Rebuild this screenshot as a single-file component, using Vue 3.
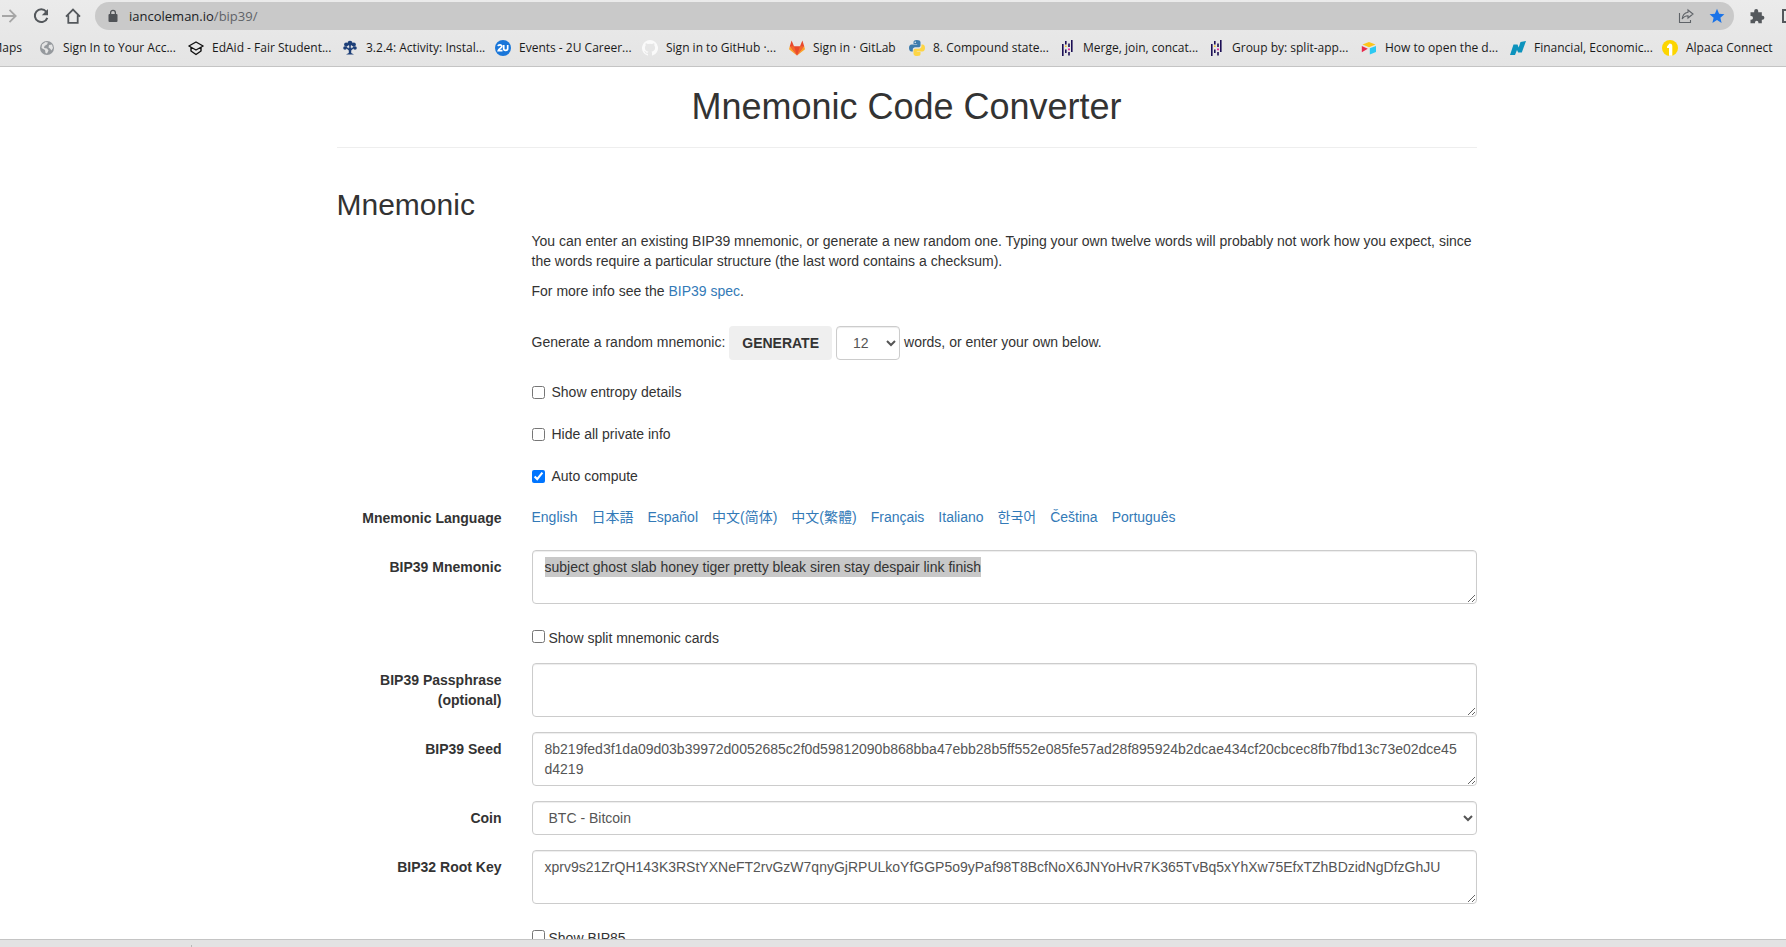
<script setup>
import { ref, onMounted } from 'vue'

const bookmarks = [
  { icon: 'globe', label: 'Sign In to Your Acc...' },
  { icon: 'edaid', label: 'EdAid - Fair Student...' },
  { icon: 'tree', label: '3.2.4: Activity: Instal...' },
  { icon: 'twou', label: 'Events - 2U Career...' },
  { icon: 'github', label: 'Sign in to GitHub ·...' },
  { icon: 'gitlab', label: 'Sign in · GitLab' },
  { icon: 'python', label: '8. Compound state...' },
  { icon: 'pandas', label: 'Merge, join, concat...' },
  { icon: 'pandas', label: 'Group by: split-app...' },
  { icon: 'airtable', label: 'How to open the d...' },
  { icon: 'nasdaq', label: 'Financial, Economic...' },
  { icon: 'alpaca', label: 'Alpaca Connect' }
]

const languages = ['English', '日本語', 'Español', '中文(简体)', '中文(繁體)', 'Français', 'Italiano', '한국어', 'Čeština', 'Português']

const phrase = ref('subject ghost slab honey tiger pretty bleak siren stay despair link finish')
const passphrase = ref('')
const seed = ref('8b219fed3f1da09d03b39972d0052685c2f0d59812090b868bba47ebb28b5ff552e085fe57ad28f895924b2dcae434cf20cbcec8fb7fbd13c73e02dce45d4219')
const rootKey = ref('xprv9s21ZrQH143K3RStYXNeFT2rvGzW7qnyGjRPULkoYfGGP5o9yPaf98T8BcfNoX6JNYoHvR7K365TvBq5xYhXw75EfxTZhBDzidNgDfzGhJU')
const strength = ref('12')
const coin = ref('btc')
const autoCompute = ref(true)

const phraseBox = ref(null)
onMounted(() => {
  phraseBox.value.focus({ preventScroll: true })
  phraseBox.value.select()
})
</script>

<template>
  <div class="window">
    <header class="chrome">
      <div class="toolbar">
        <button class="tool" aria-label="Forward">
          <svg viewBox="0 0 16 16" fill="none" stroke="#a6a6a6" stroke-width="1.8"><path d="M1 8h13M8.500 1.800 14.700 8l-6.200 6.200" /></svg>
        </button>
        <button class="tool" aria-label="Reload">
          <svg viewBox="0 0 16 16"><path d="M13.200 3.600A6.400 6.400 0 1 0 14.300 9.800" fill="none" stroke="#54585c" stroke-width="2" /><path d="M15 1v6.200H8.800z" fill="#54585c" /></svg>
        </button>
        <button class="tool home" aria-label="Home">
          <svg viewBox="0 0 16 16" fill="none" stroke="#54585c" stroke-width="1.800"><path d="M1 8.600 8 1.600l7 7M3.300 7.200v7.600h9.400V7.200" /></svg>
        </button>
        <div class="omnibox">
          <svg class="lock" viewBox="0 0 10 14"><rect x="0.500" y="5" width="9" height="8" rx="1" fill="#505357" /><path d="M2.600 6V3.700a2.400 2.400 0 0 1 4.800 0V6" fill="none" stroke="#505357" stroke-width="1.300" /></svg>
          <span class="url"><span class="host">iancoleman.io</span>/bip39/</span>
          <button class="tool" aria-label="Share">
            <svg viewBox="0 0 16 16" fill="none" stroke="#5f6368" stroke-width="1.100"><path d="M1.500 5v9.500h11V12" /><path d="M10 2l5 4-5 4V7.700C7.400 7.700 5.500 8.800 4.200 11 4.500 7.500 6.500 4.900 10 4.300z" /></svg>
          </button>
          <button class="tool" aria-label="Bookmark this tab">
            <svg viewBox="0 0 16 16"><path d="M8 .800l2.100 4.900 5.300.500-4 3.500 1.200 5.200L8 12.100l-4.600 2.800 1.200-5.200-4-3.500 5.300-.500z" fill="#1a73e8" /></svg>
          </button>
        </div>
        <button class="tool" aria-label="Extensions">
          <svg viewBox="0 0 16 16"><path d="M.500 4.200h3.700V3a2 2 0 0 1 4 0v1.200h3.600v3.600h.600a2 2 0 0 1 0 4h-.600v3.400H8.400v-.700a1.700 1.700 0 0 0-3.400 0v.700H.500v-3.500h.700a1.800 1.800 0 0 0 0-3.600H.500z" fill="#54585c" /></svg>
        </button>
        <button class="tool edge" aria-label="Side panel">
          <svg viewBox="0 0 16 16" fill="none" stroke="#54585c" stroke-width="2"><path d="M1 2h14v12H1z" /></svg>
        </button>
      </div>

      <nav class="bookmarks">
        <a href="#" class="bookmark first">Maps</a>
        <a v-for="(b, i) in bookmarks" :key="i" href="#" class="bookmark">
          <svg v-if="b.icon === 'globe'" viewBox="0 0 16 16"><circle cx="8" cy="8" r="7" fill="#95999d" /><path d="M3 4.500 6.500 2l2.500.500-1 2-2.500 1.500-.500 2 3 .500 1.500 2-1.500 3-1.500-.500-.500-3L2.500 8zM10 5l3-.500 1 3.500-1.500 2.500-1.500-2-1.500-1z" fill="#e4e4e4" /></svg>
          <svg v-else-if="b.icon === 'edaid'" viewBox="0 0 16 16" fill="none" stroke="#111" stroke-width="1.400" stroke-linejoin="round"><path d="M.900 6 8 2l7.100 4L8 10zM3 7.500V11l5 3.500 5-3.500V7.500" /></svg>
          <svg v-else-if="b.icon === 'tree'" viewBox="0 0 16 16" fill="#1d3f78"><circle cx="8" cy="3.200" r="2.500" /><circle cx="4.200" cy="4.600" r="2.100" /><circle cx="11.800" cy="4.600" r="2.100" /><circle cx="3" cy="8" r="1.800" /><circle cx="13" cy="8" r="1.800" /><path d="M7.200 5h1.600v3l3-1.500.800 1-3.400 3V13l2.800 1.500H4L6.800 13v-2.500l-3.400-3 .800-1 3 1.500z" /><path d="M5 7l2 1M11 7 9 8" stroke="#d8dde6" stroke-width=".700" /></svg>
          <svg v-else-if="b.icon === 'twou'" viewBox="0 0 16 16"><circle cx="8" cy="8" r="8" fill="#1976d9" /><path d="M3 6.200c.300-1.700 4-1.700 3.800.200C6.700 8 4 8.600 3.300 10.600h4.200M8.700 4.900v3.600c0 2.600 4 2.600 4 0V4.900" fill="none" stroke="#fff" stroke-width="1.700" /></svg>
          <svg v-else-if="b.icon === 'github'" viewBox="0 0 16 16"><path d="M8 0a8 8 0 0 0-2.500 15.600c.400.100.500-.200.500-.400v-1.500c-2.200.500-2.700-.900-2.700-.900-.400-.900-.900-1.200-.900-1.200-.700-.500.100-.500.100-.500.800.100 1.200.800 1.200.800.700 1.200 1.900.900 2.300.700.100-.500.300-.900.500-1.100-1.800-.200-3.600-.900-3.600-4 0-.900.300-1.600.800-2.100-.100-.200-.400-1 .100-2.100 0 0 .700-.200 2.200.800a7.500 7.500 0 0 1 4 0c1.500-1 2.200-.800 2.200-.800.400 1.100.200 1.900.100 2.100.500.600.800 1.300.800 2.100 0 3.100-1.900 3.800-3.700 4 .300.200.600.700.600 1.500v2.200c0 .200.100.500.500.400A8 8 0 0 0 8 0z" fill="#fafafa" /></svg>
          <svg v-else-if="b.icon === 'gitlab'" viewBox="0 0 16 16"><path d="M8 15.500 0 9.200l.800-2.900L8 15.500l7.200-9.200.800 2.900z" fill="#fca326" /><path d="M.800 6.300 2.600.500 5 6.300h6L13.400.500l1.800 5.800L8 15.500z" fill="#e8492c" /><path d="M.800 6.300H5l3 9.200zM15.200 6.300H11l-3 9.200z" fill="#f4672b" /></svg>
          <svg v-else-if="b.icon === 'python'" viewBox="0 0 16 16"><path d="M7.800 0C5 0 4.500 1 4.500 2.300V4h3.700v.600H2.600C1 4.600 0 6 0 8s.900 3.400 2.400 3.400h1.400V9.500c0-1.200 1-2.200 2.300-2.200h3.500c1 0 1.900-.900 1.900-1.900V2.300C11.500.800 10 0 7.800 0z" fill="#3e7cad" /><path d="M8.200 16c2.800 0 3.300-1 3.300-2.300V12H7.800v-.600h5.600C15 11.400 16 10 16 8s-.900-3.400-2.400-3.400h-1.200v1.900c0 1.200-1 2.200-2.300 2.200H6.400c-1 0-1.900.900-1.900 1.900v3.100C4.500 15.200 6 16 8.200 16z" fill="#fdd545" /><circle cx="6.200" cy="2.200" r=".700" fill="#fff" /></svg>
          <svg v-else-if="b.icon === 'pandas'" viewBox="0 0 16 16"><path d="M3 4h1.600v12H3zM6 1h1.600v3.500H6zM6 9.500h1.600V13H6zM9.200 3.500h1.600V7H9.200zM9.200 12h1.600v3.500H9.200zM12 0h1.600v12H12z" fill="#1c0f55" /><path d="M6 5.500h1.600v1.600H6z" fill="#f5c518" /><path d="M9.200 8.500h1.600v1.700H9.200z" fill="#e70488" /></svg>
          <svg v-else-if="b.icon === 'airtable'" viewBox="0 0 16 16"><path d="M1.500 4.500 8 2l6.500 2.500L8 7.200z" fill="#fcc419" /><path d="M8.800 8.300 15 6v6l-6.200 2.500z" fill="#2cc9f2" /><path d="M.800 6 6.800 8.700.800 12.300z" fill="#e8294b" /></svg>
          <svg v-else-if="b.icon === 'nasdaq'" viewBox="0 0 16 16" fill="#0c93bd"><path d="M3.500 4.500h4l1.200 3L10.500 2 16 1l-4.200 11.500H8.200L7 10l-2 5H0z" /></svg>
          <svg v-else viewBox="0 0 16 16"><circle cx="8" cy="8" r="8" fill="#fcd500" /><path d="M5 6.500 7.500 3.500c1.500 0 2.800.800 2.800 2.500v9.700H7V8H5z" fill="#fff" /></svg>
          <span>{{ b.label }}</span>
        </a>
      </nav>
    </header>

    <main class="page">
      <div class="container">
        <h1>Mnemonic Code Converter</h1>
        <hr />
        <h2>Mnemonic</h2>
        <form @submit.prevent>
          <div class="row intro">
            <div class="field">
              <p>You can enter an existing BIP39 mnemonic, or generate a new random one. Typing your own twelve words will probably not work how you expect, since the words require a particular structure (the last word contains a checksum).</p>
              <p>For more info see the <a href="#">BIP39 spec</a>.</p>
            </div>
          </div>
          <div class="row">
            <div class="field generate">
              <label for="strength">Generate a random mnemonic:</label>
              <button type="button" class="btn">GENERATE</button>
              <select id="strength" v-model="strength" class="control count">
                <option value="12">12</option>
                <option value="24">24</option>
              </select>
              <span>words, or enter your own below.</span>
            </div>
          </div>
          <div class="row">
            <label class="field check"><input type="checkbox" /> Show entropy details</label>
          </div>
          <div class="row">
            <label class="field check"><input type="checkbox" /> Hide all private info</label>
          </div>
          <div class="row">
            <label class="field check"><input v-model="autoCompute" type="checkbox" /> Auto compute</label>
          </div>
          <div class="row">
            <span class="label">Mnemonic Language</span>
            <div class="languages">
              <a v-for="l in languages" :key="l" href="#">{{ l }}</a>
            </div>
          </div>
          <div class="row">
            <label for="phrase" class="label">BIP39 Mnemonic</label>
            <textarea id="phrase" ref="phraseBox" v-model="phrase" class="control phrase" rows="2" spellcheck="false"></textarea>
          </div>
          <div class="row">
            <label class="field split"><input type="checkbox" /> Show split mnemonic cards</label>
          </div>
          <div class="row">
            <label for="passphrase" class="label">BIP39 Passphrase (optional)</label>
            <textarea id="passphrase" v-model="passphrase" class="control" rows="2"></textarea>
          </div>
          <div class="row">
            <label for="seed" class="label">BIP39 Seed</label>
            <textarea id="seed" v-model="seed" class="control" rows="2" spellcheck="false"></textarea>
          </div>
          <div class="row">
            <label for="coin" class="label">Coin</label>
            <select id="coin" v-model="coin" class="control">
              <option value="btc">BTC - Bitcoin</option>
            </select>
          </div>
          <div class="row">
            <label for="root" class="label">BIP32 Root Key</label>
            <textarea id="root" v-model="rootKey" class="control" rows="2" spellcheck="false"></textarea>
          </div>
          <div class="row">
            <label class="field split"><input type="checkbox" /> Show BIP85</label>
          </div>
        </form>
      </div>
    </main>

    <footer class="shelf"><span class="divider"></span></footer>
  </div>
</template>

<style>
body {
  margin: 0;
  background: #fff;
}
</style>

<style scoped>
* {
  box-sizing: border-box;
}
.window {
  display: flex;
  flex-direction: column;
  height: 100vh;
  overflow: hidden;
  color: #333;
  font: 14px/20px "Liberation Sans", Arial, "Noto Sans CJK JP", "Noto Sans CJK KR", sans-serif;
}
a {
  color: #337ab7;
  text-decoration: none;
}

/* Browser chrome */
.chrome {
  flex: none;
  overflow: hidden;
  border-bottom: 1px solid #c4c4c4;
  background: linear-gradient(#ebebeb, #e4e4e4);
  font-family: "Open Sans", "Noto Sans", sans-serif;
}
.toolbar {
  display: flex;
  align-items: center;
  gap: 16px;
  padding: 2px 0 0 1px;
}
.tool {
  flex: none;
  width: 16px;
  height: 16px;
  padding: 0;
  border: 0;
  background: none;
}
.tool svg {
  display: block;
  width: 16px;
  height: 16px;
}
.home {
  margin-right: -2px;
}
.edge {
  width: 4px;
}
.omnibox {
  display: flex;
  flex: 1;
  align-items: center;
  gap: 15px;
  height: 28px;
  padding: 0 9px 0 13px;
  border-radius: 14px;
  background: #c9c9c9;
}
.lock {
  width: 10px;
  height: 14px;
  margin-right: -4px;
}
.url {
  flex: 1;
  color: #5f6368;
  font-size: 13px;
}
.host {
  color: #202124;
}
.bookmarks {
  display: grid;
  grid-template-columns: 39px 149px 154px 153px 147px 147px 120px 150px 149px 153px 149px 152px auto;
  align-items: center;
  height: 36px;
}
.bookmark {
  display: flex;
  align-items: center;
  gap: 8px;
  color: #1a1a1a;
  font-size: 12px;
  line-height: 16px;
  white-space: nowrap;
}
.bookmark svg {
  flex: none;
  width: 16px;
  height: 16px;
}
.first {
  justify-content: flex-end;
  padding-right: 17px;
}

/* Page */
.page {
  flex: 1;
  min-height: 0;
  overflow: hidden;
  padding-left: 27px;
}
.container {
  max-width: 1140px;
  margin: 0 auto;
}
h1,
h2 {
  font-weight: 500;
}
h1 {
  margin: 20px 0;
  font-size: 36px;
  line-height: 40px;
  text-align: center;
}
hr {
  margin: 20px 0;
  border: 0;
  border-top: 1px solid #eee;
}
h2 {
  margin: 40px 0 10px;
  font-size: 30px;
  line-height: 33px;
}
.row {
  display: grid;
  grid-template-columns: 165px 1fr;
  column-gap: 30px;
  align-items: start;
  margin-bottom: 15px;
}
.intro {
  margin-bottom: 25px;
}
.field {
  grid-column: 2;
}
p {
  margin: 0;
}
p + p {
  margin-top: 10px;
}
.label {
  padding-top: 7px;
  font-weight: 700;
  text-align: right;
}
.generate {
  display: flex;
  align-items: center;
  gap: 4px;
}
.generate label,
.generate span {
  padding-bottom: 2px;
}
.btn {
  height: 34px;
  padding: 0 13px;
  border: 0;
  border-radius: 4px;
  background: #efefef;
  color: #333;
  font: inherit;
  font-weight: 700;
}
.control {
  display: block;
  width: 100%;
  margin: 0;
  padding: 6px 12px;
  border: 1px solid #ccc;
  border-radius: 4px;
  outline: none;
  background: #fff;
  box-shadow: inset 0 1px 1px rgba(0, 0, 0, 0.075);
  color: #555;
  font: inherit;
}
select.control {
  height: 34px;
}
select.count {
  width: 64px;
}
.phrase::selection {
  background: #c8c8c8;
  color: #333;
}
input {
  flex: none;
  width: 13px;
  height: 13px;
  margin: 0;
}
.check {
  display: flex;
  align-items: center;
  gap: 7px;
  height: 27px;
  padding-top: 7px;
}
.split {
  display: flex;
  gap: 4px;
  align-items: flex-start;
  padding-top: 9px;
}
.split input {
  margin-top: 2px;
}
.languages {
  display: flex;
  gap: 14px;
  height: 34px;
  padding-top: 6px;
}

.shelf {
  display: flex;
  flex: none;
  align-items: flex-end;
  height: 8px;
  padding-left: 191px;
  border-top: 1px solid #c4c4c4;
  background: #e3e3e3;
}
.divider {
  width: 1px;
  height: 2px;
  background: #b8b8b8;
}
</style>
